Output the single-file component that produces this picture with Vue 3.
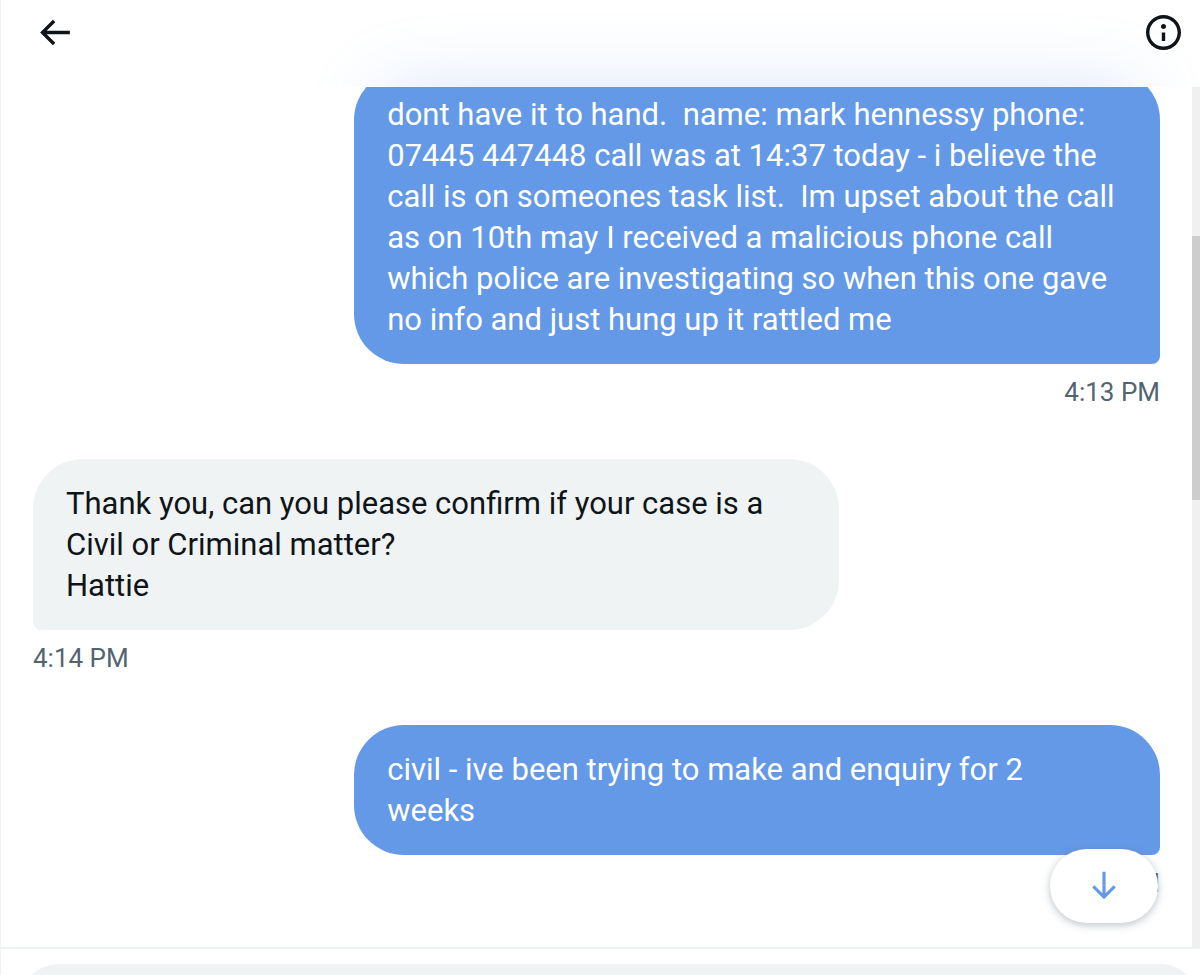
<template>
    <div class="chat">
        <header class="chat-header">
            <button class="icon-btn" type="button" aria-label="Back">
                <svg viewBox="0 0 24 24"><path d="M7.414 13l5.043 5.04-1.414 1.42L3.586 12l7.457-7.46 1.414 1.42L7.414 11H21v2H7.414z" /></svg>
            </button>
            <button class="icon-btn" type="button" aria-label="Conversation info">
                <svg viewBox="0 0 24 24"><path d="M13.5 8.5c0 .83-.67 1.5-1.5 1.5s-1.5-.67-1.5-1.5S11.17 7 12 7s1.5.67 1.5 1.5zM13 17v-5h-2v5h2zm-1 5.25c5.66 0 10.25-4.59 10.25-10.25S17.66 1.75 12 1.75 1.75 6.34 1.75 12 6.34 22.25 12 22.25zM20.25 12c0 4.56-3.69 8.25-8.25 8.25S3.75 16.56 3.75 12 7.44 3.75 12 3.75s8.25 3.69 8.25 8.25z" /></svg>
            </button>
        </header>

        <main class="chat-body">
            <div class="messages">
                <div v-for="msg in messages" :key="msg.id" class="message" :class="{ mine: msg.mine }">
                    <p class="bubble">{{ msg.text }}</p>
                    <time class="time">{{ msg.time }}</time>
                </div>
            </div>
            <div class="scroll-track">
                <div class="scroll-thumb"></div>
            </div>
            <button class="jump-btn" type="button" aria-label="Scroll to bottom">
                <svg viewBox="0 0 24 24"><path d="M13 3v13.59l5.043-5.05 1.414 1.42L12 20.41l-7.457-7.45 1.414-1.42L11 16.59V3h2z" /></svg>
            </button>
        </main>

        <footer class="composer">
            <input v-model="draft" class="composer-input" type="text" aria-label="Message">
        </footer>
    </div>
</template>

<script setup>
import { ref } from 'vue'

const draft = ref('')

const messages = ref([
    {
        id: 1,
        mine: true,
        text: 'dont have it to hand.  name: mark hennessy phone: 07445 447448 call was at 14:37 today - i believe the call is on someones task list.  Im upset about the call as on 10th may I received a malicious phone call which police are investigating so when this one gave no info and just hung up it rattled me',
        time: '4:13 PM'
    },
    {
        id: 2,
        mine: false,
        text: 'Thank you, can you please confirm if your case is a Civil or Criminal matter?\nHattie',
        time: '4:14 PM'
    },
    {
        id: 3,
        mine: true,
        text: 'civil - ive been trying to make and enquiry for 2\nweeks',
        time: '4:14 PM'
    }
])
</script>

<style>
body {
    margin: 0;
    background: #fff;
}
</style>

<style scoped>
.chat {
    display: flex;
    flex-direction: column;
    height: 100vh;
    overflow: hidden;
    box-sizing: border-box;
    border-left: 1px solid #eff3f4;
    font-family: Roboto, "Noto Sans", sans-serif;
    color: #0f1419;
}

.chat-header {
    position: relative;
    display: flex;
    flex-shrink: 0;
    justify-content: space-between;
    height: 87px;
    padding: 12px 16px 0 33px;
    box-sizing: border-box;
    overflow: hidden;
    background: #fff;
}

/* tint of the bubble that is scrolled under the header */
.chat-header::after {
    content: '';
    position: absolute;
    top: 100%;
    right: 64px;
    width: 63%;
    height: 80px;
    box-shadow: 0 0 72px rgba(99, 153, 231, 0.24);
    pointer-events: none;
}

.icon-btn {
    width: 41px;
    height: 41px;
    padding: 0;
    border: 0;
    background: none;
    cursor: pointer;
}

.icon-btn svg {
    display: block;
    width: 41px;
    height: 41px;
    fill: #0f1419;
}

.chat-body {
    position: relative;
    display: flex;
    flex: 1;
    min-height: 0;
}

.messages {
    display: flex;
    flex: 1;
    flex-direction: column;
    justify-content: flex-end;
    gap: 51px;
    padding: 0 32px 48px;
    overflow: hidden;
}

.message {
    display: flex;
    flex-direction: column;
    align-items: flex-start;
}

.message.mine {
    align-items: flex-end;
}

.bubble {
    width: 71.5%;
    margin: 0;
    padding: 24px 33px;
    box-sizing: border-box;
    border-radius: 50px 50px 50px 8px;
    background: #eff3f4;
    font-size: 31px;
    line-height: 41px;
    white-space: pre-wrap;
}

.mine .bubble {
    border-radius: 50px 50px 8px 50px;
    background: #6399e7;
    color: #fff;
}

.time {
    margin-top: 12px;
    color: #536471;
    font-size: 26px;
    line-height: 32px;
}

.scroll-track {
    width: 8px;
    padding-top: 149px;
    box-sizing: border-box;
    background: #f0f0f0;
}

.scroll-thumb {
    height: 264px;
    background: #cdcdcd;
}

.jump-btn {
    position: absolute;
    right: 42px;
    bottom: 24px;
    display: flex;
    align-items: center;
    justify-content: center;
    width: 108px;
    height: 74px;
    padding: 0;
    border: 0;
    border-radius: 37px;
    background: #fff;
    box-shadow: 0 2px 8px rgba(101, 119, 134, 0.45);
    cursor: pointer;
}

.jump-btn svg {
    width: 38px;
    height: 38px;
    fill: #6399e7;
}

.composer {
    flex-shrink: 0;
    height: 28px;
    padding: 15px 0 0 18px;
    box-sizing: border-box;
    border-top: 2px solid #eff3f4;
}

.composer-input {
    display: block;
    width: 100%;
    height: 80px;
    padding: 0 32px;
    box-sizing: border-box;
    border: 0;
    border-radius: 40px;
    background: #eff3f4;
    font: inherit;
    font-size: 31px;
}
</style>
